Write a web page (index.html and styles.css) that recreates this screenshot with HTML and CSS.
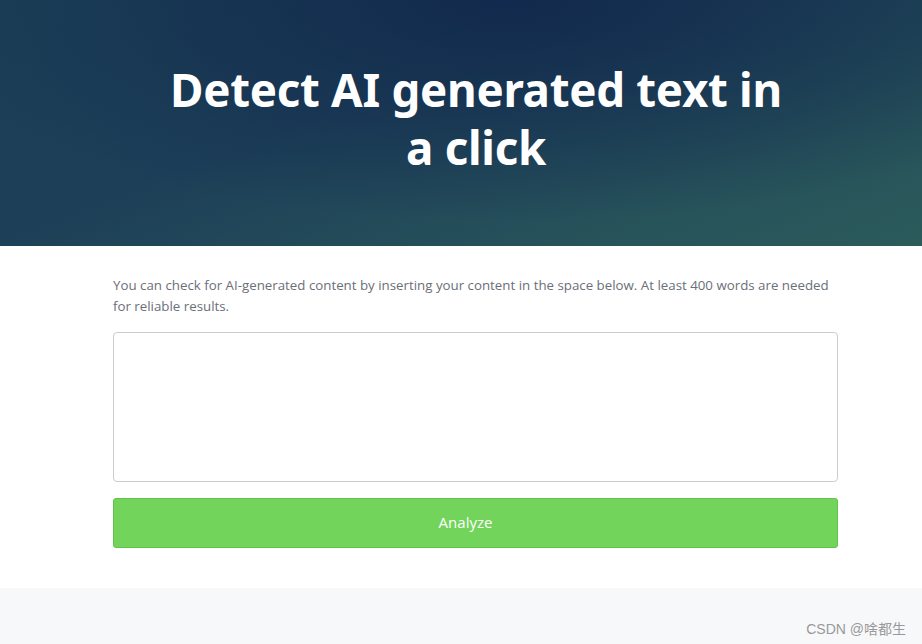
FILE: index.html
```html
<!DOCTYPE html>
<html>
<head>
<meta charset="utf-8">
<link rel="stylesheet" href="styles.css">
</head>
<body>
<header class="hero">
  <h1 class="hero-title">Detect AI generated text in a click</h1>
</header>
<main class="main">
  <div class="container">
    <p class="intro">You can check for AI-generated content by inserting your content in the space below. At least 400 words are needed for reliable results.</p>
    <textarea class="input"></textarea>
    <button class="analyze">Analyze</button>
  </div>
</main>
<footer class="footer">
  <span class="credit">CSDN @啥都生</span>
</footer>
</body>
</html>
```
FILE: styles.css
```css
* { box-sizing: border-box; }
html, body { margin: 0; padding: 0; }
body {
  font-family: "Open Sans", "Noto Sans", "Noto Sans CJK SC", sans-serif;
  background: #f7f8fa;
  width: 922px;
  height: 644px;
  overflow: hidden;
}
.hero {
  height: 246px;
  background:
    radial-gradient(ellipse 70% 90% at 55% 0%, rgba(18,42,77,1) 0%, rgba(18,42,77,0) 100%),
    linear-gradient(160deg, #1c4257 0%, #1d3f58 40%, #26515a 75%, #2b5b5b 100%);
  display: flex;
  justify-content: center;
  padding: 60px 0 0 30px;
}
.hero-title {
  margin: 0;
  width: 650px;
  text-align: center;
  color: #fff;
  font-family: "Noto Sans", "Open Sans", sans-serif;
  font-weight: 700;
  font-size: 45.7px;
  line-height: 58px;
  letter-spacing: -0.3px;
}
.main {
  background: #fff;
  height: 342px;
  padding: 29px 0 0 113px;
}
.container {
  width: 725px;
  display: flex;
  flex-direction: column;
}
.intro {
  margin: 0 0 15px;
  font-size: 13.3px;
  line-height: 21px;
  color: #6a6f78;
}
.input {
  width: 100%;
  height: 150px;
  border: 1px solid #cccccc;
  border-radius: 4px;
  resize: none;
  margin: 0 0 16px;
  padding: 8px;
  font: inherit;
}
.analyze {
  width: 100%;
  height: 50px;
  background: #72d45a;
  border: 1px solid #62c24b;
  border-radius: 3px;
  color: #fff;
  font-family: inherit;
  font-size: 15px;
  padding: 0 20px 2px 0;
}
.footer {
  height: 56px;
  display: flex;
  justify-content: flex-end;
  align-items: center;
  padding-right: 16px;
}
.credit {
  font-family: "Liberation Sans", "Noto Sans CJK SC", sans-serif;
  font-size: 14px;
  color: #999;
  margin-top: 23px;
}
```
